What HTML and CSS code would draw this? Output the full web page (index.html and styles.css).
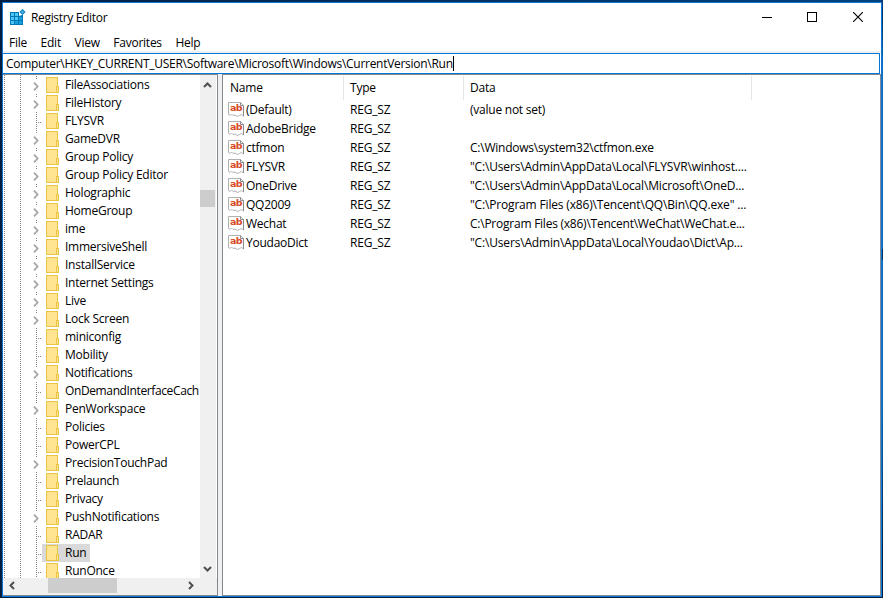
FILE: index.html
```html
<!DOCTYPE html>
<html lang="en">
<head>
    <meta charset="UTF-8">
    <title>Registry Editor</title>
    <link rel="stylesheet" href="styles.css">
</head>
<body>
    <svg class="symbols" width="0" height="0">
        <symbol id="folder" viewBox="0 0 13 16">
            <rect x="0.5" y="0.5" width="11" height="15" fill="#ffe591" stroke="#ecc444"/>
            <rect x="10.5" y="9.5" width="2" height="6" fill="#ffe591" stroke="#ecc444"/>
        </symbol>
        <symbol id="chevron" viewBox="0 0 6 9">
            <path d="M1 0.7 L4.6 4.5 L1 8.3" fill="none" stroke="#a6a6a6" stroke-width="1.8"/>
        </symbol>
        <symbol id="page" viewBox="0 0 16 15">
            <path d="M0.5 0.5 H12.5 L15.5 3.5 V14 L13.5 12.5 L11.5 13.5 L9.5 14.5 L7 13 L5 13.5 L3.5 12 L2 13.5 L0.5 12.5 Z" fill="#fff" stroke="#b0b0b0"/>
            <path d="M12.5 0.5 V3.5 H15.5 V14" fill="none" stroke="#8c8c8c"/>
        </symbol>
    </svg>

    <div class="window">
        <header class="titlebar">
            <svg class="app-icon" width="16" height="16" viewBox="0 0 16 16">
                <rect x="0" y="3" width="13" height="13" fill="#0078b8"/>
                <path d="M1 4h3v3h-3z M5 4h3v3h-3z M1 8h3v3h-3z M5 8h3v3h-3z M1 12h3v3h-3z" fill="#4fc8f8"/>
                <path d="M9 8h3v3h-3z M5 12h3v3h-3z M9 12h3v3h-3z" fill="#16a0dc"/>
                <path d="M9 0h7v6h-4l-3 1z" fill="#fff"/>
                <path d="M12.5 0 L15.5 3 L12.5 6 L9.5 3 Z" fill="#0078b8"/>
                <path d="M12.5 1.5 L14 3 L12.5 4.5 L11 3 Z" fill="#4fc8f8"/>
            </svg>
            <h1>Registry Editor</h1>
            <div class="controls">
                <svg width="10" height="10"><path d="M0 5.5 H10" stroke="#000"/></svg>
                <svg width="10" height="10"><rect x="0.5" y="0.5" width="9" height="9" fill="none" stroke="#000"/></svg>
                <svg class="close" width="10" height="10"><path d="M0 0 L10 10 M10 0 L0 10" stroke="#000" stroke-width="1.1"/></svg>
            </div>
        </header>
        <nav class="menu">
            <span>File</span><span>Edit</span><span>View</span><span>Favorites</span><span>Help</span>
        </nav>
        <div class="address"><span>Computer\HKEY_CURRENT_USER\Software\Microsoft\Windows\CurrentVersion\Run</span></div>

        <main>
            <section class="tree-pane">
                <div class="tree-area">
                    <ul class="tree" id="tree"></ul>
                    <div class="scroll-v">
                        <svg width="9" height="6"><path d="M1 5 L4.5 1.5 L8 5" fill="none" stroke="#505050" stroke-width="2"/></svg>
                        <div class="thumb"></div>
                        <svg width="9" height="6"><path d="M1 1 L4.5 4.5 L8 1" fill="none" stroke="#505050" stroke-width="2"/></svg>
                    </div>
                </div>
                <div class="scroll-h">
                    <svg width="6" height="9"><path d="M5 1 L1.5 4.5 L5 8" fill="none" stroke="#505050" stroke-width="2"/></svg>
                    <div class="thumb"></div>
                    <svg width="6" height="9"><path d="M1 1 L4.5 4.5 L1 8" fill="none" stroke="#505050" stroke-width="2"/></svg>
                </div>
            </section>
            <section class="list-pane">
                <div class="row head"><span>Name</span><span>Type</span><span>Data</span></div>
                <div id="values"></div>
            </section>
        </main>
    </div>

    <script>
        // a leading + marks a key that has subkeys
        const keys = ['+FileAssociations', '+FileHistory', 'FLYSVR', '+GameDVR', '+Group Policy',
            '+Group Policy Editor', '+Holographic', '+HomeGroup', '+ime', '+ImmersiveShell',
            '+InstallService', '+Internet Settings', '+Live', '+Lock Screen', 'miniconfig',
            'Mobility', '+Notifications', 'OnDemandInterfaceCach', '+PenWorkspace', 'Policies',
            'PowerCPL', '+PrecisionTouchPad', 'Prelaunch', 'Privacy', '+PushNotifications',
            'RADAR', 'Run', 'RunOnce'];

        const values = [
            ['(Default)', '(value not set)'],
            ['AdobeBridge', ''],
            ['ctfmon', 'C:\\Windows\\system32\\ctfmon.exe'],
            ['FLYSVR', '"C:\\Users\\Admin\\AppData\\Local\\FLYSVR\\winhost....'],
            ['OneDrive', '"C:\\Users\\Admin\\AppData\\Local\\Microsoft\\OneD...'],
            ['QQ2009', '"C:\\Program Files (x86)\\Tencent\\QQ\\Bin\\QQ.exe" ...'],
            ['Wechat', 'C:\\Program Files (x86)\\Tencent\\WeChat\\WeChat.e...'],
            ['YoudaoDict', '"C:\\Users\\Admin\\AppData\\Local\\Youdao\\Dict\\Ap...']
        ];

        document.getElementById('tree').innerHTML = keys.map(key => {
            const parent = key[0] === '+';
            const name = key.replace('+', '');
            const branch = parent ? '<svg width="6" height="9"><use href="#chevron"/></svg>' : '';
            const cls = name === 'Run' ? 'selected' : name.length > 20 ? 'long' : '';
            return `<li class="${cls}">
                <div class="branch ${parent ? 'parent' : 'leaf'}">${branch}</div>
                <div class="key"><svg width="13" height="16"><use href="#folder"/></svg><span>${name}</span></div>
            </li>`;
        }).join('');

        document.getElementById('values').innerHTML = values.map(([name, data]) => `<div class="row">
            <span class="name"><i class="icon"><svg width="16" height="15"><use href="#page"/></svg><b>ab</b></i>${name}</span>
            <span>REG_SZ</span><span class="${data[0] === '"' ? 'quoted' : 'plain'}">${data}</span>
        </div>`).join('');
    </script>
</body>
</html>
```
FILE: styles.css
```css
* { box-sizing: border-box; }
body { margin: 0; height: 598px; padding: 2px 1px 1px 2px; background: linear-gradient(#04386f 0 20px, #0a6cc4 60px 249px, #04305f 249px 260px, #0a6cc4 260px 400px, #041e42 560px) right / 1px 100% no-repeat, linear-gradient(90deg, #041e42, #04427f) top / 100% 2px no-repeat, #041e42; font: 12px "Open Sans", "Noto Sans", sans-serif; letter-spacing: -0.2px; color: #000; overflow: hidden; }
svg { display: block; flex: none; }
.symbols { position: absolute; }
ul { list-style: none; margin: 0; padding: 0; }

.window { height: 595px; border: 1px solid #0a78d4; background: #fff; display: flex; flex-direction: column; }
.titlebar { height: 28px; display: flex; align-items: center; padding-left: 7px; }
.titlebar h1 { font-size: 12px; font-weight: normal; margin: 0 0 0 5px; letter-spacing: -0.33px; }
.controls { display: flex; gap: 35px; margin-left: auto; padding-right: 18px; }
.controls .close { margin-left: 1px; }
.menu { height: 22px; display: flex; gap: 13.6px; padding: 3px 6px 0; line-height: 17px; letter-spacing: -0.25px; border-bottom: 2px solid #f0f0f0; }
.address { height: 21px; margin: 0 1px 0 -1px; border: 1px solid #0078d7; padding: 1px 3px; line-height: 18px; letter-spacing: -0.28px; white-space: nowrap; }
.address span { display: inline-block; height: 15px; line-height: 16px; margin-top: 1px; border-right: 1px solid #000; }

main { flex: 1; display: flex; background: #f0f0f0; min-height: 0; }
.tree-pane { width: 215px; border: 1px solid #828790; border-left: 0; background: #fff; display: flex; flex-direction: column; }
.list-pane { flex: 1; margin-left: 4px; border: 1px solid #828790; background: #fff; }

.tree-area { flex: 1; display: flex; min-height: 0; padding-right: 1px; }
.tree { width: 197px; flex: none; padding-top: 1px; overflow: hidden; background: repeating-linear-gradient(#808080 0 1px, transparent 1px 2px) 1px 0 / 1px 100% no-repeat, repeating-linear-gradient(#808080 0 1px, transparent 1px 2px) 17px 0 / 1px 100% no-repeat; }
.tree li { height: 18px; display: flex; white-space: nowrap; letter-spacing: -0.24px; }
.tree li.long { letter-spacing: -0.38px; }
.branch { width: 39px; flex: none; padding: 6px 0 0 30px; background: repeating-linear-gradient(#808080 0 1px, transparent 1px 2px) 33px 0 / 1px 100% no-repeat; }
.branch.parent { background-size: 1px 3px; }
.branch.leaf { background-image: repeating-linear-gradient(#808080 0 1px, transparent 1px 2px), repeating-linear-gradient(90deg, #808080 0 1px, transparent 1px 2px); background-position: 33px 0, 35px 10px; background-size: 1px 100%, 8px 1px; background-repeat: no-repeat; }
.key { display: flex; padding: 1px 4px 0; line-height: 16px; }
.key span { margin-left: 6px; }
.selected .key { background: #d9d9d9; }

.scroll-v { width: 16px; background: #f0f0f0; padding: 7px 1px 6px 0; display: flex; flex-direction: column; align-items: center; }
.scroll-v .thumb { width: 15px; height: 17px; margin: 102px 0 auto; background: #cdcdcd; }
.scroll-h { height: 17px; background: #f0f0f0; padding: 0 23px 2px 6px; display: flex; align-items: center; }
.scroll-h .thumb { width: 69px; height: 15px; margin: 0 auto 0 33px; background: #cdcdcd; }

.row { display: grid; grid-template-columns: 121px 120px 288px; height: 19px; line-height: 19px; white-space: nowrap; }
.row span { padding-left: 6px; }
.row span:first-child { padding-left: 7px; }
.row .quoted { letter-spacing: -0.17px; }
.row .plain { letter-spacing: -0.24px; }
.head { height: 24px; margin: 1px 0 0; line-height: 23px; }
.head span { border-right: 1px solid #e5e5e5; }
.row .name.name { display: flex; padding-left: 5px; letter-spacing: -0.25px; }
.icon { width: 18px; height: 19px; padding-top: 2px; position: relative; font-style: normal; flex: none; }
.icon b { position: absolute; left: 2px; top: 2px; font: bold 9.5px/12px "DejaVu Sans", sans-serif; letter-spacing: -0.7px; color: #d84a27; }
```
